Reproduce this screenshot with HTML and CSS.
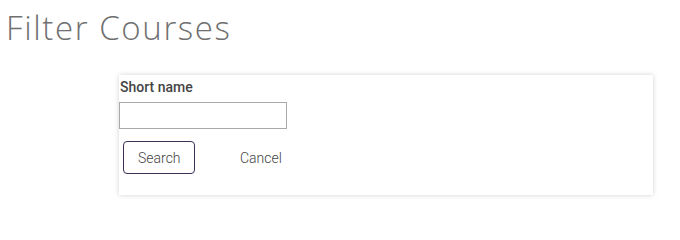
FILE: index.html
```html
<!DOCTYPE html>
<html>
<head>
<meta charset="utf-8">
<link rel="stylesheet" href="styles.css">
</head>
<body>
<h1 class="page-title">Filter Courses</h1>
<div class="card">
  <form class="filter-form">
    <label class="field-label" for="shortname">Short name</label>
    <input class="field-input" id="shortname" type="text">
    <div class="actions">
      <button type="button" class="btn btn-primary">Search</button>
      <button type="button" class="btn btn-link">Cancel</button>
    </div>
  </form>
</div>
</body>
</html>
```
FILE: styles.css
```css
html, body {
  margin: 0;
  padding: 0;
  background: #ffffff;
}
body {
  width: 680px;
  height: 211px;
  overflow: hidden;
  font-family: Roboto, "Liberation Sans", sans-serif;
}
.page-title {
  margin: 0;
  padding: 5px 0 0 6px;
  font-family: "Open Sans", Lato, sans-serif;
  font-weight: 300;
  font-size: 33px;
  line-height: 46px;
  color: #707070;
  letter-spacing: 1.6px;
}
.card {
  margin: 24px 0 0 119px;
  width: 534px;
  height: 120px;
  background: #ffffff;
  box-shadow: 0 0 5px rgba(0, 0, 0, 0.18);
  box-sizing: border-box;
  padding: 2px 0 0 0;
}
.filter-form {
  display: flex;
  flex-direction: column;
  align-items: flex-start;
}
.field-label {
  font-weight: 500;
  font-size: 14px;
  line-height: 20px;
  color: #444444;
  padding-left: 1px;
}
.field-input {
  margin-top: 5px;
  width: 168px;
  height: 27px;
  box-sizing: border-box;
  border: 1px solid #a9a9a9;
  border-radius: 0;
  padding: 2px 4px;
  font-size: 14px;
  outline: none;
}
.actions {
  display: flex;
  align-items: center;
  gap: 31px;
  margin-top: 12px;
  margin-left: 4px;
}
.btn {
  font-family: Roboto, "Liberation Sans", sans-serif;
  font-weight: 300;
  font-size: 14px;
  color: #444444;
  background: transparent;
  height: 33px;
  padding: 0 14px;
  cursor: pointer;
}
.btn-primary {
  width: 72px;
  border: 1px solid #3d2f55;
  border-radius: 4px;
}
.btn-link {
  border: none;
  padding: 0 14px;
}
```
